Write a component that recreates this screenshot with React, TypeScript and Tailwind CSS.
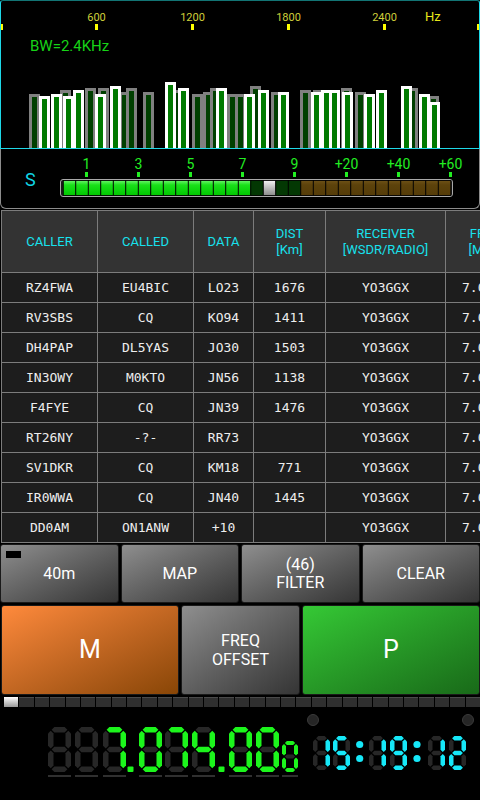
import React from "react";

// spectrum bars: [x, top y]
const GRAY_BARS: [number, number][] = [
  [29, 94], [60, 90], [85, 88], [98, 88], [119, 92], [126, 88], [143, 92],
  [173, 90], [192, 94], [203, 92], [210, 88], [227, 94], [235, 94], [250, 86],
  [271, 92], [300, 90], [313, 90], [341, 88], [355, 92], [407, 88], [428, 96],
];
const WHITE_BARS: [number, number][] = [
  [39, 96], [51, 94], [63, 96], [73, 90], [95, 94], [110, 86], [165, 82],
  [178, 88], [216, 88], [244, 94], [258, 90], [278, 92], [311, 92], [321, 90],
  [329, 90], [342, 92], [364, 94], [376, 90], [401, 86], [419, 94], [429, 102],
];

const HEAD = ["CALLER", "CALLED", "DATA", "DIST\n[Km]", "RECEIVER\n[WSDR/RADIO]", "FREQ\n[MHz]"];
const ROWS = [
  ["RZ4FWA", "EU4BIC", "LO23", "1676"],
  ["RV3SBS", "CQ", "KO94", "1411"],
  ["DH4PAP", "DL5YAS", "JO30", "1503"],
  ["IN3OWY", "M0KTO", "JN56", "1138"],
  ["F4FYE", "CQ", "JN39", "1476"],
  ["RT26NY", "-?-", "RR73", ""],
  ["SV1DKR", "CQ", "KM18", "771"],
  ["IR0WWA", "CQ", "JN40", "1445"],
  ["DD0AM", "ON1ANW", "+10", ""],
];

const SEGS: Record<string, string> = {
  "0": "abcdef", "1": "bc", "2": "abdeg", "3": "abcdg", "4": "bcfg",
  "5": "acdfg", "6": "acdefg", "7": "abc", "8": "abcdefg", "9": "abcdfg", " ": "",
};

function segPolys(x: number, y: number, w: number, h: number, t: number) {
  const g = 0.9;
  const ht = t / 2;
  const hs = (x1: number, x2: number, cy: number) =>
    `${x1},${cy} ${x1 + ht},${cy - ht} ${x2 - ht},${cy - ht} ${x2},${cy} ${x2 - ht},${cy + ht} ${x1 + ht},${cy + ht}`;
  const vs = (cx: number, y1: number, y2: number) =>
    `${cx},${y1} ${cx + ht},${y1 + ht} ${cx + ht},${y2 - ht} ${cx},${y2} ${cx - ht},${y2 - ht} ${cx - ht},${y1 + ht}`;
  const l = x + ht, r = x + w - ht, top = y + ht, mid = y + h / 2, bot = y + h - ht;
  return {
    a: hs(l + g, r - g, top),
    b: vs(r, top + g, mid - g),
    c: vs(r, mid + g, bot - g),
    d: hs(l + g, r - g, bot),
    e: vs(l, mid + g, bot - g),
    f: vs(l, top + g, mid - g),
    g: hs(l + g, r - g, mid),
  } as Record<string, string>;
}

type Cell = { ch: string; x: number; y: number; w: number; h: number; t: number };

function SegCells({ cells, color }: { cells: Cell[]; color: string }) {
  return (
    <>
      {cells.map((c, i) => {
        const p = segPolys(c.x, c.y, c.w, c.h, c.t);
        return (
          <g key={i}>
            {"abcdefg".split("").map((s) => (
              <polygon key={s} points={p[s]} fill={SEGS[c.ch].includes(s) ? color : "#272727"} />
            ))}
          </g>
        );
      })}
    </>
  );
}

const FREQ_CELLS: Cell[] = [
  [0, " "], [27, " "], [55, "7"], [91, "0"], [117, "7"], [144, "4"], [181, "0"], [208, "0"],
].map(([x, ch]) => ({ ch: ch as string, x: x as number, y: 0, w: 23, h: 45, t: 5.5 }));
FREQ_CELLS.push({ ch: "0", x: 234, y: 14, w: 16, h: 31, t: 4 });

const TIME_CELLS: Cell[] = [
  [0, "1"], [20, "5"], [56, "1"], [77, "9"], [115, "1"], [136, "2"],
].map(([x, ch]) => ({ ch: ch as string, x: x as number, y: 0, w: 17, h: 34, t: 4.5 }));

function segColor(i: number) {
  if (i < 15) return "url(#sOn)";
  if (i === 16) return "url(#sMark)";
  if (i < 19) return "#033803";
  return "url(#sOver)";
}

function GrayBtn({ children, className = "" }: { children: React.ReactNode; className?: string }) {
  return (
    <button
      className={`relative flex flex-col items-center justify-center rounded-[3px] border border-[#1a1a1a] bg-linear-to-br from-[#8f8f8f] to-[#353535] text-[16px] leading-[18px] text-white ${className}`}
    >
      {children}
    </button>
  );
}

export default function App() {
  return (
    <div className="flex h-[800px] w-[480px] flex-col overflow-hidden bg-black font-['Roboto','Liberation_Sans',sans-serif]">
      {/* spectrum */}
      <div className="h-[149px] rounded-t-[3px] border border-[#1ed8e8] border-t-[#127474]">
        <svg width={478} height={147} viewBox="1 1 478 147" className="block">
          {[96, 192, 288, 384].map((x) => (
            <g key={x}>
              <text x={x + 0.5} y={21} textAnchor="middle" fontSize={11} fill="#cfcf3a" fontFamily="Roboto, sans-serif">
                {x * 6.25}
              </text>
              <rect x={x - 1} y={24} width={3} height={6} fill="#ffff00" />
            </g>
          ))}
          <rect x={1} y={24} width={2} height={6} fill="#ffff00" />
          <rect x={477} y={24} width={2} height={6} fill="#ffff00" />
          <text x={425} y={21} fontSize={13} fill="#e8e81a" fontFamily="Roboto, sans-serif">Hz</text>
          <text x={30} y={51} fontSize={15} fill="#17d317" fontFamily="Roboto, sans-serif">BW=2.4KHz</text>
          {GRAY_BARS.map(([x, y]) => (
            <g key={`g${x}`}>
              <rect x={x} y={y} width={11} height={148 - y} fill="#808080" />
              <rect x={x + 3} y={y + 3} width={5} height={145 - y} fill="#003f00" />
            </g>
          ))}
          {WHITE_BARS.map(([x, y]) => (
            <g key={`w${x}`}>
              <rect x={x} y={y} width={11} height={148 - y} fill="#ffffff" />
              <rect x={x + 3} y={y + 3} width={5} height={145 - y} fill="#007a00" />
            </g>
          ))}
        </svg>
      </div>

      {/* s-meter */}
      <div className="flex h-[60px] rounded-b-[6px] border-x border-b border-[#8c8c8c]">
        <span className="w-[55px] pl-[24px] pt-[20px] text-[18px] leading-[21px] text-[#10d4e4]">S</span>
        <svg width={414} height={58} viewBox="56 150 414 58" className="block">
          <defs>
            <linearGradient id="sOn" x1="0" y1="0" x2="0" y2="1">
              <stop offset="0" stopColor="#6bf56b" />
              <stop offset="0.3" stopColor="#19e019" />
              <stop offset="1" stopColor="#00c800" />
            </linearGradient>
            <linearGradient id="sMark" x1="0" y1="0" x2="0" y2="1">
              <stop offset="0" stopColor="#f4f4f4" />
              <stop offset="0.5" stopColor="#bdbdbd" />
              <stop offset="1" stopColor="#8a8a8a" />
            </linearGradient>
            <linearGradient id="sOver" x1="0" y1="0" x2="0" y2="1">
              <stop offset="0" stopColor="#6e5216" />
              <stop offset="0.3" stopColor="#5c420b" />
              <stop offset="1" stopColor="#553c08" />
            </linearGradient>
          </defs>
          {["1", "3", "5", "7", "9", "+20", "+40", "+60"].map((l, i) => (
            <g key={l}>
              <text x={86.5 + i * 52} y={170} textAnchor="middle" fontSize={14} fill="#22ee22" fontFamily="Roboto, sans-serif">
                {l}
              </text>
              <rect x={85 + i * 52} y={173} width={3} height={5} fill="#22ee22" />
            </g>
          ))}
          <rect x={60.5} y={180.5} width={392} height={17} rx={2.5} fill="#1a1a1a" stroke="#a8a8a8" />
          {Array.from({ length: 31 }).map((_, i) => (
            <rect key={i} x={63.3 + i * 12.5} y={181.5} width={12.5} height={15} fill={segColor(i)} stroke="#000" strokeWidth={0.8} />
          ))}
        </svg>
      </div>

      {/* decoded table */}
      <div className="mt-[1px] h-[333px] overflow-hidden">
        <table className="ml-[1px] w-[524px] table-fixed border-collapse">
          <colgroup>
            <col className="w-[96px]" />
            <col className="w-[96px]" />
            <col className="w-[60px]" />
            <col className="w-[72px]" />
            <col className="w-[120px]" />
            <col className="w-[80px]" />
          </colgroup>
          <thead>
            <tr className="bg-[#333333]">
              {HEAD.map((h) => (
                <th
                  key={h}
                  className="h-[62px] whitespace-pre-line border border-[#7c7c7c] p-0 text-center text-[13px] font-normal leading-[16px] text-[#17e2ee]"
                >
                  {h}
                </th>
              ))}
            </tr>
          </thead>
          <tbody>
            {ROWS.map((r) => (
              <tr key={r[0]} className="bg-[#1d1d1d]">
                {[...r, "YO3GGX", "7.0746"].map((v, i) => (
                  <td
                    key={i}
                    className="h-[30px] whitespace-nowrap border border-[#7c7c7c] p-0 pt-[1px] text-center font-['DejaVu_Sans_Mono',monospace] text-[13px] leading-[16px] text-[#eeeeee]"
                  >
                    {v}
                  </td>
                ))}
              </tr>
            ))}
          </tbody>
        </table>
      </div>

      {/* buttons */}
      <div className="mt-[1px] grid h-[59px] grid-cols-4 gap-[2px]">
        <GrayBtn>
          <span className="absolute left-[5px] top-[6px] h-[7px] w-[15px] bg-black" />
          40m
        </GrayBtn>
        <GrayBtn>MAP</GrayBtn>
        <GrayBtn>
          <span>(46)</span>
          <span>FILTER</span>
        </GrayBtn>
        <GrayBtn>CLEAR</GrayBtn>
      </div>
      <div className="mt-[2px] grid h-[90px] grid-cols-[178px_119px_178px] gap-[2px] pl-[1px]">
        <button className="flex items-center justify-center rounded-[3px] border border-[#1a1a1a] bg-linear-to-br from-[#ff8a3c] to-[#894606] text-[25px] text-white">
          M
        </button>
        <GrayBtn className="leading-[19px]">
          <span>FREQ</span>
          <span>OFFSET</span>
        </GrayBtn>
        <button className="flex items-center justify-center rounded-[3px] border border-[#1a1a1a] bg-linear-to-br from-[#35c935] to-[#196a19] text-[25px] text-white">
          P
        </button>
      </div>

      {/* level strip */}
      <div className="mt-[2px] grid h-[10px] grid-cols-[repeat(31,1fr)] gap-[1px] pl-[4px]">
        {Array.from({ length: 31 }).map((_, i) => (
          <div
            key={i}
            className={
              i === 0
                ? "bg-linear-to-b from-[#ffffff] to-[#9a9a9a]"
                : "border-t border-[#4a4a4a] bg-[#2f2f2f]"
            }
          />
        ))}
      </div>

      {/* frequency / clock */}
      <div className="flex flex-1 items-start pl-[48px] pt-[7px]">
        <svg width={252} height={52} className="mt-[13px] block" role="img" aria-label="7.074.000">
          <SegCells cells={FREQ_CELLS} color="#1cf51c" />
          <rect x={79.5} y={39.5} width={6} height={5.5} rx={1} fill="#1cf51c" />
          <rect x={170.5} y={39.5} width={6} height={5.5} rx={1} fill="#1cf51c" />
          {FREQ_CELLS.map((c) => (
            <rect key={c.x} x={c.x} y={48} width={c.w} height={2} fill="#303030" />
          ))}
        </svg>
        <div className="ml-[7px] flex w-[167px] flex-col">
          <div className="flex justify-between">
            <span className="h-[12px] w-[12px] rounded-full border border-[#3a3a3a] bg-[#262626]" />
            <span className="h-[12px] w-[12px] rounded-full border border-[#3a3a3a] bg-[#262626]" />
          </div>
          <svg width={155} height={34} className="ml-[6px] mt-[10px] block" role="img" aria-label="15:19:12">
            <SegCells cells={TIME_CELLS} color="#16e8f8" />
            {[46.7, 104].map((x) => (
              <g key={x}>
                <circle cx={x} cy={8.5} r={3.6} fill="#16e8f8" />
                <circle cx={x} cy={22.5} r={3.6} fill="#16e8f8" />
              </g>
            ))}
          </svg>
        </div>
      </div>
    </div>
  );
}
